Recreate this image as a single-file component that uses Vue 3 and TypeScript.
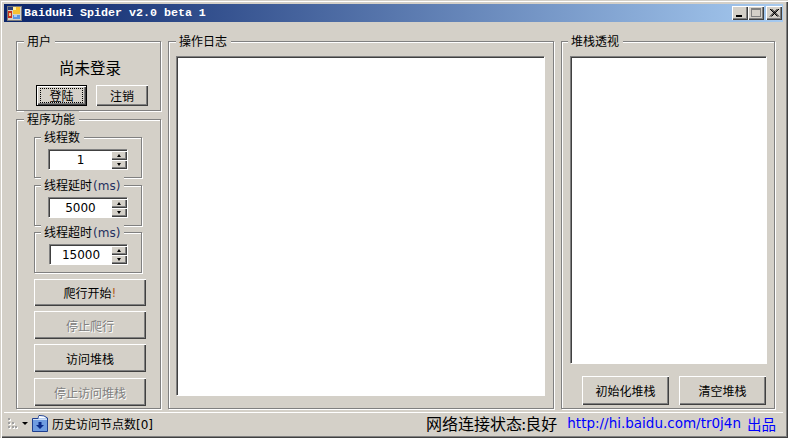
<script setup lang="ts">
interface Spin { label: string; unit?: string; value: string; cls?: string }
const spins: Spin[] = [
  { label: '线程数', value: '1' },
  { label: '线程延时', unit: '(ms)', value: '5000' },
  { label: '线程超时', unit: '(ms)', value: '15000', cls: 'narrow' },
]
</script>

<template>
  <div class="window">
    <header class="titlebar">
      <svg class="appicon" width="15" height="15" viewBox="0 0 15 15">
        <rect x="0.5" y="0.5" width="14" height="14" fill="#d4d0c8" stroke="#7a7a7a" />
        <rect x="1" y="1" width="5" height="3" fill="#2a3f78" />
        <rect x="1" y="5" width="4" height="7" fill="#c8301e" />
        <rect x="2" y="7" width="2" height="3" fill="#e8d080" />
        <rect x="6" y="1" width="7" height="7" fill="#f7c030" />
        <rect x="6" y="1" width="3" height="3" fill="#fff0a0" />
        <rect x="6" y="9" width="7" height="4" fill="#5c94e0" />
        <rect x="7" y="9" width="3" height="2" fill="#a8ccf4" />
      </svg>
      <span class="title">BaiduHi Spider v2.0 beta 1</span>
      <div class="caption-buttons">
        <button class="cap"><svg width="14" height="12" viewBox="0 0 14 12"><rect x="3" y="8" width="6" height="2" fill="#000" /></svg></button>
        <button class="cap"><svg width="14" height="12" viewBox="0 0 14 12"><rect x="2.5" y="1.5" width="9" height="8" fill="none" stroke="#808080" /><rect x="2" y="1" width="10" height="2" fill="#808080" /></svg></button>
        <button class="cap close"><svg width="14" height="12" viewBox="0 0 14 12"><path d="M3 2 L10.5 9.5 M4.5 2 L12 9.5 M10.5 2 L3 9.5 M12 2 L4.5 9.5" stroke="#000" stroke-width="1" fill="none" /></svg></button>
      </div>
    </header>

    <main class="content">
      <div class="left">
        <section class="group user">
          <span class="legend">用户</span>
          <div class="status-text">尚未登录</div>
          <div class="user-buttons">
            <button class="btn default"><span class="focus">登陆</span></button>
            <button class="btn">注销</button>
          </div>
        </section>

        <section class="group program">
          <span class="legend">程序功能</span>
          <div class="spin-list">
            <section v-for="s in spins" :key="s.label" class="group sub">
              <span class="legend">{{ s.label }}<span v-if="s.unit" class="unit">{{ s.unit }}</span></span>
              <div class="spinner" :class="s.cls">
                <span class="spin-value">{{ s.value }}</span>
                <div class="spin-arrows">
                  <span class="arrow"><i class="up"></i></span>
                  <span class="arrow"><i class="down"></i></span>
                </div>
              </div>
            </section>
          </div>
          <div class="actions">
            <button class="btn wide">爬行开始<span class="bang">!</span></button>
            <button class="btn wide off">停止爬行</button>
            <button class="btn wide">访问堆栈</button>
            <button class="btn wide off">停止访问堆栈</button>
          </div>
        </section>
      </div>

      <section class="group log">
        <span class="legend">操作日志</span>
        <div class="textbox"></div>
      </section>

      <section class="group stack">
        <span class="legend">堆栈透视</span>
        <div class="textbox"></div>
        <div class="stack-buttons">
          <button class="btn">初始化堆栈</button>
          <button class="btn">清空堆栈</button>
        </div>
      </section>
    </main>

    <footer class="statusbar">
      <svg class="grip" width="11" height="13" viewBox="0 0 11 13">
        <g fill="#fff">
          <rect x="2" y="2" width="2" height="2" /><rect x="2" y="6" width="2" height="2" /><rect x="6" y="6" width="2" height="2" />
          <rect x="2" y="10" width="2" height="2" /><rect x="6" y="10" width="2" height="2" /><rect x="9" y="10" width="2" height="2" />
        </g>
        <g fill="#a0a0a0">
          <rect x="1" y="1" width="2" height="2" /><rect x="1" y="5" width="2" height="2" /><rect x="5" y="5" width="2" height="2" />
          <rect x="1" y="9" width="2" height="2" /><rect x="5" y="9" width="2" height="2" /><rect x="8" y="9" width="2" height="2" />
        </g>
      </svg>
      <i class="drop"></i>
      <svg class="folder" width="16" height="17" viewBox="0 0 16 17">
        <path d="M0.5 3.5 V16.5 H15.5 V3 L12 1 L7 0.5 L6 3.5 Z" fill="#6f9ce0" stroke="#1f3f8f" />
        <path d="M7 1 L12 1.5 L15 3.5 H6.5 Z" fill="#fff" />
        <path d="M1 4 H15 V5 H1 Z" fill="#cfe0f8" />
        <path d="M6.5 7 H9.5 V10 H12 L8 14 L4 10 H6.5 Z" fill="#0a2a88" />
      </svg>
      <span class="history">历史访问节点数<span class="latin">[0]</span></span>
      <span class="net">网络连接状态<span class="colon">:</span>良好</span>
      <span class="link">http://hi.baidu.com/tr0j4n</span>
      <span class="made">出品</span>
    </footer>
  </div>
</template>

<style>
html, body { margin: 0; background: #d4d0c8; }
</style>

<style scoped>
.window {
  box-sizing: border-box;
  width: 788px;
  height: 438px;
  display: flex;
  flex-direction: column;
  padding: 4px 5px 4px 4px;
  background: #d4d0c8;
  box-shadow: inset 1px 1px 0 #d4d0c8, inset 2px 2px 0 #fff, inset -1px -1px 0 #404040, inset -2px -2px 0 #808080;
  font: 12px "DejaVu Sans", "Noto Sans CJK SC", sans-serif;
  color: #000;
  overflow: hidden;
}
.titlebar {
  flex: none;
  height: 18px;
  display: flex;
  align-items: center;
  padding: 0 1px 0 3px;
  background: linear-gradient(90deg, #0a246a, #a6caf0);
}
.appicon { flex: none; }
.title {
  margin-left: 2px;
  font: bold 11.67px "Liberation Mono", "Noto Sans CJK SC", monospace;
  color: #fff;
  white-space: nowrap;
}
.caption-buttons { margin-left: auto; display: flex; }
.cap {
  box-sizing: border-box;
  width: 16px;
  height: 14px;
  padding: 0;
  border: 0;
  background: #d4d0c8;
  box-shadow: inset 1px 1px 0 #fff, inset -1px -1px 0 #404040, inset -2px -2px 0 #808080;
  display: flex;
  align-items: center;
  justify-content: center;
}
.cap svg { display: block; }
.cap.close { margin-left: 2px; }

.content {
  flex: 1;
  min-height: 0;
  display: flex;
  gap: 7px;
  padding: 19px 0 3px 12px;
}
.left { width: 145px; flex: none; display: flex; flex-direction: column; gap: 8px; }

.group {
  position: relative;
  box-sizing: border-box;
  border: 1px solid #808080;
  box-shadow: 1px 1px 0 #fff, inset 1px 1px 0 #fff;
}
.legend {
  position: absolute;
  top: -9px;
  left: 7px;
  padding: 0 4px 0 3px;
  background: #d4d0c8;
  font: 12px/16px "Noto Sans CJK SC", "DejaVu Sans", sans-serif;
  white-space: nowrap;
}
.unit { font-family: "DejaVu Sans", sans-serif; color: #1f2f5f; margin-left: 1px; }

.user { height: 70px; display: flex; flex-direction: column; }
.status-text {
  margin: 15px 0 0 42px;
  font: 15.5px/20px "Noto Sans CJK SC", sans-serif;
}
.user-buttons { display: flex; gap: 9px; margin: 8px 0 0 19px; }
.user-buttons .btn { width: 52px; height: 21px; }
.user-buttons .btn.default { width: 51px; }

.btn {
  box-sizing: border-box;
  padding: 0;
  border: 0;
  background: #d4d0c8;
  box-shadow: inset 1px 1px 0 #fff, inset -1px -1px 0 #404040, inset -2px -2px 0 #808080;
  font: 12px "Noto Sans CJK SC", "DejaVu Sans", sans-serif;
  color: #000;
  display: flex;
  align-items: center;
  justify-content: center;
}
.btn.default {
  box-shadow: inset 0 0 0 1px #000, inset 2px 2px 0 #fff, inset -2px -2px 0 #404040, inset -3px -3px 0 #808080;
}
.focus {
  box-sizing: border-box;
  width: 43px;
  height: 15px;
  line-height: 13px;
  border: 1px dotted #000;
  text-align: center;
}
.btn.off { color: #808080; text-shadow: 1px 1px 0 #fff; }
.bang { color: #b06020; font-family: "DejaVu Sans", sans-serif; }

.program { flex: 1; padding: 17px 0 0 17px; display: flex; flex-direction: column; }
.spin-list { display: flex; flex-direction: column; gap: 6px; }
.sub { width: 108px; height: 41px; display: flex; align-items: flex-start; padding: 11px 0 0 13px; }
.sub .legend { left: 6px; }
.sub:nth-child(2) { margin-top: 1px; }
.spinner {
  box-sizing: border-box;
  width: 79px;
  height: 20px;
  flex: none;
  display: flex;
  background: #fff;
  box-shadow: inset 1px 1px 0 #808080, inset 2px 2px 0 #404040, 1px 1px 0 #fff;
  padding: 2px 0 0 2px;
}
.spinner.narrow { width: 78px; margin-left: 1px; }
.spin-value {
  flex: 1;
  text-align: center;
  font: 12px/19px "DejaVu Sans", sans-serif;
  color: #000;
}
.spin-arrows { width: 16px; height: 18px; display: flex; flex-direction: column; }
.arrow {
  flex: 1;
  display: flex;
  align-items: center;
  justify-content: center;
  background: #d4d0c8;
  box-shadow: inset 1px 1px 0 #fff, inset -1px -1px 0 #404040, inset -2px -2px 0 #808080;
}
.up, .down { width: 0; height: 0; border-left: 2.5px solid transparent; border-right: 2.5px solid transparent; }
.up { border-bottom: 3px solid #000; }
.down { border-top: 3px solid #000; }

.actions { display: flex; flex-direction: column; margin-top: 6px; gap: 5px; }
.btn.wide { width: 112px; height: 28px; }
.actions .btn:nth-child(1) { height: 27px; }
.actions .btn:nth-child(4) { margin-top: 1px; }

.log { width: 386px; padding: 14px 9px 13px 7px; display: flex; }
.textbox {
  box-sizing: border-box;
  flex: 1;
  background: #fff;
  box-shadow: inset 1px 1px 0 #808080, inset 2px 2px 0 #404040, 1px 1px 0 #fff;
}
.stack { width: 214px; padding: 14px 8px 3px 8px; display: flex; flex-direction: column; }
.stack .legend { left: 6px; }
.stack-buttons { flex: none; display: flex; gap: 10px; margin: 13px 0 0 12px; }
.stack-buttons .btn { width: 88px; height: 29px; }

.statusbar {
  flex: none;
  height: 22px;
  display: flex;
  align-items: center;
  padding: 0 7px 0 3px;
  box-sizing: border-box;
  box-shadow: inset 0 1px 0 #fff;
  white-space: nowrap;
}
.grip { flex: none; }
.drop {
  flex: none;
  margin-left: 4px;
  width: 0;
  height: 0;
  border-left: 3px solid transparent;
  border-right: 3px solid transparent;
  border-top: 3px solid #000;
}
.folder { flex: none; margin-left: 4px; }
.history { margin-left: 4px; font: 12px "Noto Sans CJK SC", sans-serif; }
.latin { font-family: "DejaVu Sans", sans-serif; }
.net { margin-left: auto; font: 16px "Noto Sans CJK SC", sans-serif; }
.colon { font-family: "DejaVu Sans", sans-serif; margin: 0 -1px; }
.link { margin-left: 10px; font: 13.5px "DejaVu Sans", sans-serif; color: #0000ff; }
.made { margin-left: 6px; font: 14.5px "Noto Sans CJK SC", sans-serif; color: #0000ff; }
</style>
